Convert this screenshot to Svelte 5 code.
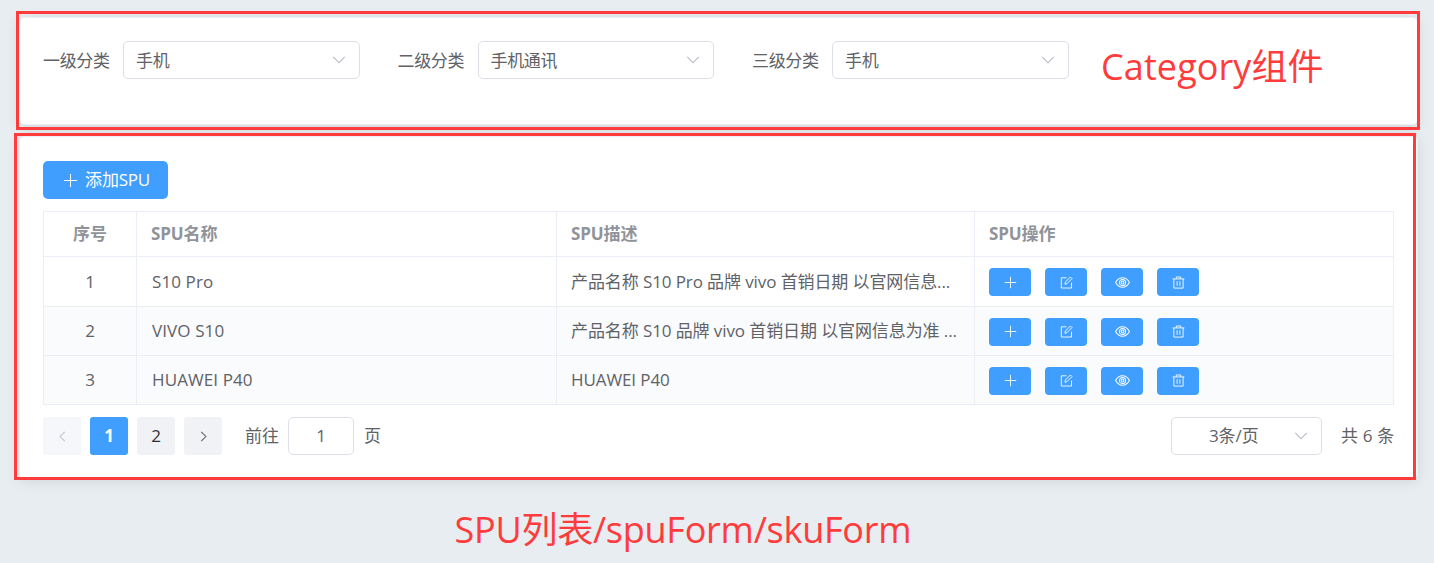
<script>
  const categories = [
    { label: '一级分类', value: '手机' },
    { label: '二级分类', value: '手机通讯' },
    { label: '三级分类', value: '手机' },
  ];
  const rows = [
    { name: 'S10 Pro', desc: '产品名称 S10 Pro 品牌 vivo 首销日期 以官网信息...' },
    { name: 'VIVO S10', desc: '产品名称 S10 品牌 vivo 首销日期 以官网信息为准 ...' },
    { name: 'HUAWEI P40', desc: 'HUAWEI P40' },
  ];
  const actions = ['plus', 'edit', 'view', 'delete'];
</script>

{#snippet icon(name)}
  <svg class="icon {name}" viewBox="0 0 16 16" aria-hidden="true">
    {#if name === 'plus'}
      <path d="M8 1v14M1 8h14" />
    {:else if name === 'edit'}
      <path d="M8 2.2H1.600v12.600h12.600V8.2" />
      <path d="M6.100 10.200l.5-2.800 6.200-6.200 2 2-6.200 6.200z" />
    {:else if name === 'view'}
      <path d="M.6 8C2.500 4.700 5.100 3 8 3s5.500 1.700 7.400 5c-1.900 3.300-4.500 5-7.400 5S2.500 11.300.6 8z" />
      <circle cx="8" cy="8" r="3.300" />
      <circle cx="8" cy="8" r="1.500" />
    {:else if name === 'delete'}
      <path d="M.8 3.600h14.400M2.300 3.600v11.300h11.400V3.600M5.300 3.400V1.200h5.400v2.200M6.300 6.500v5.600M9.700 6.500v5.600" />
    {:else if name === 'down'}
      <path d="M1.500 4.500l6.500 6.700 6.500-6.700" />
    {:else if name === 'left'}
      <path d="M10.800 2.200L5 8l5.800 5.800" />
    {:else}
      <path d="M5.200 2.200L11 8l-5.800 5.800" />
    {/if}
  </svg>
{/snippet}

<div class="page">
  <section class="card filters">
    {#each categories as c}
      <div class="field">
        <span class="label">{c.label}</span>
        <div class="select"><span>{c.value}</span>{@render icon('down')}</div>
      </div>
    {/each}
  </section>

  <section class="card list">
    <button class="add">{@render icon('plus')}<span>添加<i>SPU</i></span></button>
    <div class="table">
      <div class="row head">
        <div class="cell center">序号</div>
        <div class="cell">SPU名称</div>
        <div class="cell">SPU描述</div>
        <div class="cell">SPU操作</div>
      </div>
      {#each rows as r, i}
        <div class="row" class:stripe={i > 0}>
          <div class="cell center">{i + 1}</div>
          <div class="cell name">{r.name}</div>
          <div class="cell">{r.desc}</div>
          <div class="cell actions">
            {#each actions as a}
              <button class="mini" aria-label={a}>{@render icon(a)}</button>
            {/each}
          </div>
        </div>
      {/each}
    </div>
    <div class="pager">
      <button class="page-btn off" aria-label="prev">{@render icon('left')}</button>
      <button class="page-btn current">1</button>
      <button class="page-btn">2</button>
      <button class="page-btn" aria-label="next">{@render icon('right')}</button>
      <span class="goto">前往</span>
      <div class="jump">1</div>
      <span class="unit">页</span>
      <div class="size"><span>3条/页</span>{@render icon('down')}</div>
      <span class="total">共 6 条</span>
    </div>
  </section>

  <div class="frame frame-category"></div>
  <div class="frame frame-list"></div>
  <div class="note note-category">Category组件</div>
  <div class="note note-list">SPU列表/spuForm/skuForm</div>
</div>

<style>
  :global(body) { margin: 0; background: #e8edf1; }
  .page {
    position: relative;
    box-sizing: border-box;
    width: 1434px;
    height: 563px;
    padding: 17px 16px 0 19px;
    overflow: hidden;
    background: #e8edf1;
    color: #606266;
    font: 17px/24px "Open Sans", "Noto Sans CJK SC", sans-serif;
    letter-spacing: -0.1px;
    white-space: nowrap;
  }
  .page * { box-sizing: border-box; }
  button { border: 0; padding: 0; font: inherit; letter-spacing: inherit; color: inherit; }
  .card {
    background: #fff;
    border: 1px solid #ebeef5;
    border-radius: 5px;
    box-shadow: 0 2px 14px rgba(0, 0, 0, 0.1);
  }
  .icon { display: block; flex: none; fill: none; stroke: currentColor; stroke-width: 1.100; }
  .filters { display: flex; height: 108px; padding: 23px 23px; gap: 37px; letter-spacing: -0.35px; }
  .field { display: flex; align-items: center; height: 38px; width: 317.500px; gap: 13px; }
  .field span { padding-top: 2px; }
  .label { width: 67px; }
  .select {
    display: flex; align-items: center; justify-content: space-between;
    width: 236.500px; height: 38px; padding: 0 13px 0 12px;
    border: 1px solid #dcdfe6; border-radius: 5px;
  }
  .down { width: 14px; height: 14px; color: #b4b8c0; stroke-width: 1.200; }
  .list { height: 343px; margin-top: 11px; padding: 24px 23px; }
  .add {
    display: flex; align-items: center; gap: 7px;
    width: 125px; height: 38px; padding-left: 20px;
    border-radius: 5px; background: #409eff; color: #fff;
  }
  .add .icon { width: 15px; height: 15px; }
  .add i { font-style: normal; letter-spacing: -0.3px; }
  .table { width: 1351px; margin-top: 12px; border: 1px solid #ebeef5; border-bottom: 0; }
  .row {
    display: grid; grid-template-columns: 93px 420px 418px 1fr;
    height: 49px; border-bottom: 1px solid #ebeef5;
  }
  .head { height: 45px; color: #909399; font-weight: 700; }
  .head + .row { height: 50px; }
  .stripe { background: #fafbfd; }
  .cell { display: flex; align-items: center; padding-left: 14px; border-right: 1px solid #ebeef5; overflow: hidden; }
  .cell:last-child { border-right: 0; }
  .name { padding-left: 15px; letter-spacing: 0.1px; }
  .cell.center { justify-content: center; padding: 0; }
  .actions { gap: 14px; padding-top: 1px; }
  .mini { display: grid; place-items: center; width: 42px; height: 28px; border-radius: 4px; background: #409eff; color: #fff; }
  .mini .icon { width: 13px; height: 13px; }
  .mini .view { width: 15px; height: 15px; }
  .pager { display: flex; align-items: center; width: 1351px; height: 38px; margin-top: 12px; }
  .page-btn {
    display: grid; place-items: center; width: 38px; height: 38px; margin-right: 9px;
    border-radius: 3px; background: #f0f2f5; color: #303133;
  }
  .page-btn .icon { width: 13px; height: 13px; color: #606266; stroke-width: 1.300; }
  .off { background: #f5f7fa; }
  .off .icon { color: #c0c4cc; }
  .current { background: #409eff; color: #fff; font-weight: 700; }
  .goto { width: 43px; margin-left: 14px; }
  .jump { width: 66px; height: 38px; border: 1px solid #dcdfe6; border-radius: 5px; text-align: center; line-height: 36px; }
  .unit { margin-left: 10px; }
  .size {
    display: flex; align-items: center; justify-content: space-between;
    width: 151px; height: 38px; margin-left: auto; padding: 0 13px 0 37px;
    border: 1px solid #dcdfe6; border-radius: 5px;
  }
  .total { width: 53px; margin-left: 19px; letter-spacing: 0.2px; }
  .frame { position: absolute; border: 3px solid #ff3b3b; }
  .frame-category { left: 16px; top: 11px; width: 1404px; height: 119px; }
  .frame-list { left: 14px; top: 133px; width: 1402px; height: 347px; }
  .note { position: absolute; color: #ff3b3b; font-size: 36px; line-height: 50px; }
  .note-category { left: 1101px; top: 42px; letter-spacing: 0.1px; }
  .note-list { left: 454.500px; top: 505px; letter-spacing: -0.25px; }
</style>
